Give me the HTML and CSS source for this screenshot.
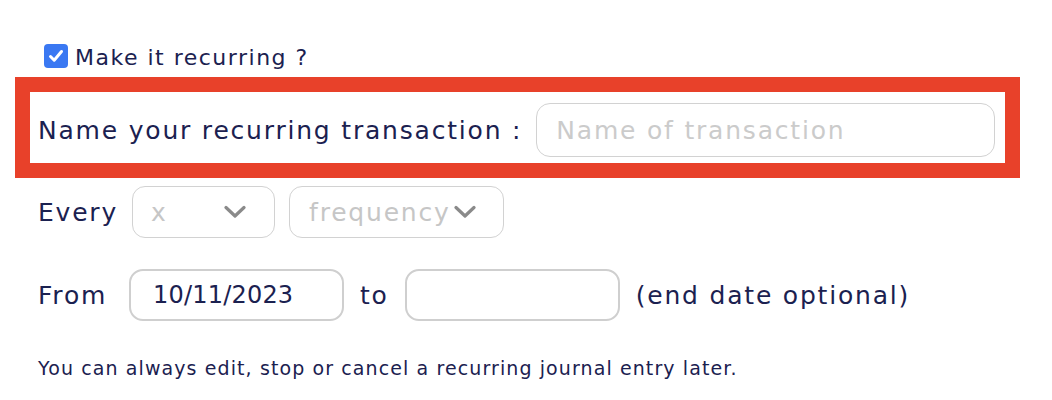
FILE: index.html
```html
<!DOCTYPE html>
<html lang="en">
	<head>
		<meta charset="UTF-8" />
		<meta name="viewport" content="width=device-width, initial-scale=1.0" />
		<title>Recurring entry</title>
		<link rel="stylesheet" href="styles.css">
	</head>
	<body>
		<div class="form">
			<!-- Checkbox -->
			<label class="recurring">
				<span class="check">
					<svg width="18" height="18" viewBox="0 0 18 18">
						<path d="M3.5 9.5 L7.2 13.2 L14.5 4.5" fill="none" stroke="#fff" stroke-width="3" stroke-linecap="round" stroke-linejoin="round" />
					</svg>
				</span>
				<span class="recurring-text">Make it recurring ?</span>
			</label>

			<!-- Name -->
			<div class="name-row">
				<span class="label">Name your recurring transaction :</span>
				<input class="name-input" type="text" placeholder="Name of transaction" />
			</div>

			<!-- Frequency -->
			<div class="row every">
				<span class="label">Every</span>
				<div class="select select-x">
					<span>x</span>
					<svg width="22" height="14" viewBox="0 0 22 14"><path d="M2 2.5 L11 11 L20 2.5" fill="none" stroke="#8a8a8a" stroke-width="3.2" stroke-linecap="round" stroke-linejoin="round" /></svg>
				</div>
				<div class="select select-freq">
					<span>frequency</span>
					<svg width="22" height="14" viewBox="0 0 22 14"><path d="M2 2.5 L11 11 L20 2.5" fill="none" stroke="#8a8a8a" stroke-width="3.2" stroke-linecap="round" stroke-linejoin="round" /></svg>
				</div>
			</div>

			<!-- Dates -->
			<div class="row dates">
				<span class="label from">From</span>
				<div class="date">10/11/2023</div>
				<span class="label">to</span>
				<div class="date"></div>
				<span class="label">(end date optional)</span>
			</div>

			<p class="note">You can always edit, stop or cancel a recurring journal entry later.</p>
		</div>
	</body>
</html>
```

FILE: styles.css
```css
body {
	margin: 0;
	font-family: "DejaVu Sans", sans-serif;
	color: #1b2150;
	background: #fff;
}
.form {
	padding: 43px 0 0 38px;
}
.recurring {
	display: flex;
	align-items: center;
	gap: 7px;
	margin-left: 6px;
	height: 25px;
	font-size: 22px;
	letter-spacing: 1.5px;
}
.recurring-text {
	margin-top: 4px;
}
.check {
	width: 24px;
	height: 24px;
	border-radius: 4px;
	background: #3a78f2;
	display: flex;
	align-items: center;
	justify-content: center;
}
.label {
	font-size: 25px;
	letter-spacing: 1.8px;
	white-space: nowrap;
}
.name-row {
	display: flex;
	align-items: center;
	box-sizing: border-box;
	width: 1005px;
	margin: 9px 0 0 -23px;
	padding: 11px 10px 6px 8px;
	border: 15px solid #e8412a;
	gap: 14px;
}
.name-input {
	flex: 1;
	min-width: 0;
	height: 54px;
	box-sizing: border-box;
	border: 1px solid #d2d2d2;
	border-radius: 14px;
	padding: 0 19px;
	font-family: "DejaVu Sans", sans-serif;
	font-size: 25px;
	letter-spacing: 1.8px;
	color: #1b2150;
	outline: none;
}
.name-input::placeholder {
	color: #cbcbcb;
}
.row {
	display: flex;
	align-items: center;
}
.every {
	margin-top: 8px;
	gap: 14px;
}
.select {
	box-sizing: border-box;
	height: 52px;
	border: 1px solid #d2d2d2;
	border-radius: 13px;
	display: flex;
	align-items: center;
	justify-content: space-between;
	font-size: 25px;
	letter-spacing: 1.8px;
	color: #c6c6c6;
}
.select-x {
	width: 143px;
	padding: 0 28px 0 18px;
}
.select-freq {
	width: 215px;
	padding: 0 27px 0 19px;
}
.dates {
	margin-top: 31px;
	gap: 16px;
}
.from {
	width: 75px;
}
.date {
	box-sizing: border-box;
	width: 215px;
	height: 52px;
	border: 2px solid #cfcfcf;
	border-radius: 14px;
	padding: 0 22px;
	display: flex;
	align-items: center;
	font-size: 24px;
	letter-spacing: 0.2px;
}
.note {
	margin: 36px 0 0;
	font-size: 19px;
	letter-spacing: 1.1px;
}
```
